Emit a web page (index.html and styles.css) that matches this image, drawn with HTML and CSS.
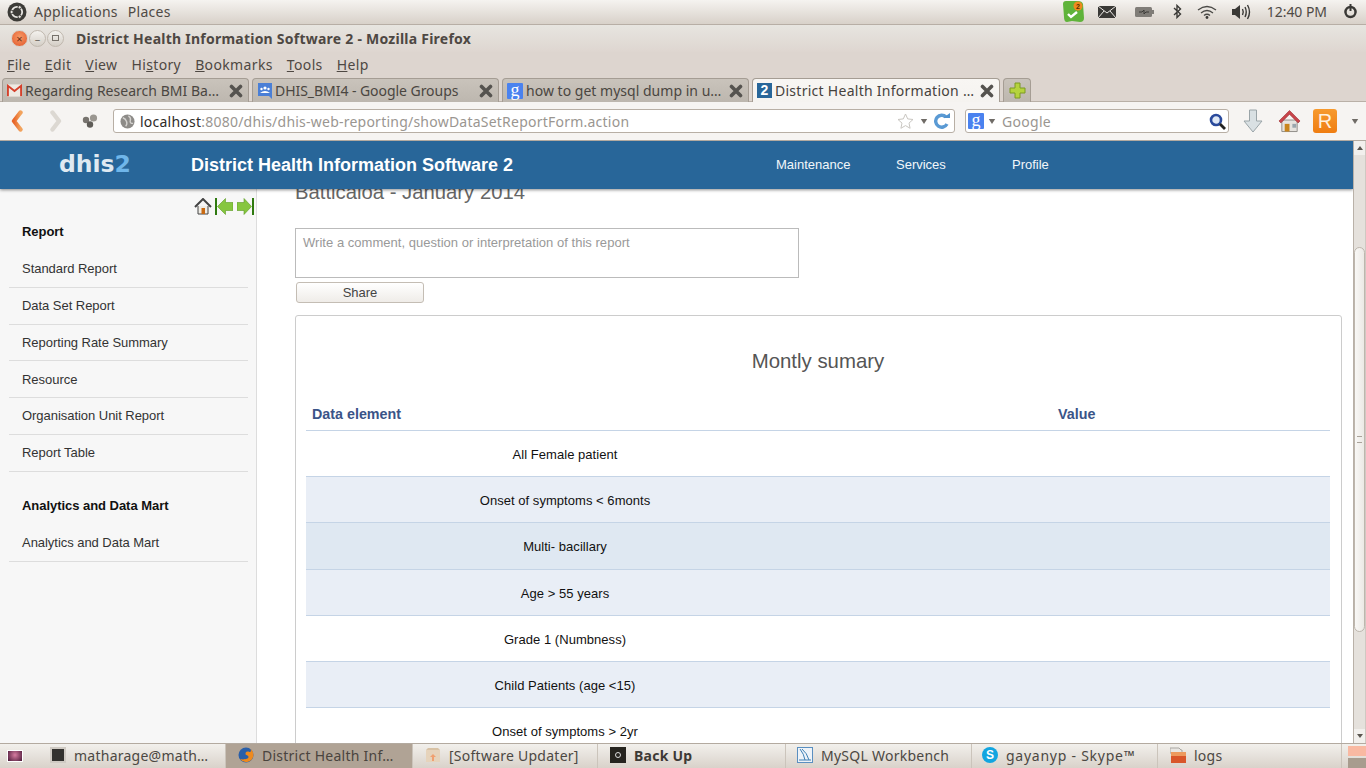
FILE: index.html
```html
<!DOCTYPE html>
<html lang="en">
<head>
<meta charset="utf-8">
<title>District Health Information Software 2 - Mozilla Firefox</title>
<link rel="stylesheet" href="styles.css">
</head>
<body>
<svg class="defs" width="0" height="0" aria-hidden="true">
  <symbol id="tabx" viewBox="0 0 14 14"><path d="M2.5 2.5 11.5 11.5M11.5 2.5 2.5 11.5" stroke="#55534f" stroke-width="3.6" stroke-linecap="round"/></symbol>
  <symbol id="caret" viewBox="0 0 10 6"><path d="M1 0h8L5 6z" fill="#6f6b66"/></symbol>
</svg>
<div class="desktop">
  <header class="panel">
    <div class="panel-left">
      <svg class="ubuntu" width="20" height="20" viewBox="0 0 20 20"><circle cx="10" cy="10" r="9.5" fill="#3c3b37"/><circle cx="10" cy="10" r="5.2" fill="none" stroke="#e8e6e2" stroke-width="1.8"/><circle cx="4.6" cy="10" r="1.7" fill="#e8e6e2" stroke="#3c3b37"/><circle cx="12.7" cy="5.3" r="1.7" fill="#e8e6e2" stroke="#3c3b37"/><circle cx="12.7" cy="14.7" r="1.7" fill="#e8e6e2" stroke="#3c3b37"/></svg>
      <span class="panel-menu">Applications</span>
      <span class="panel-menu">Places</span>
    </div>
    <div class="tray">
      <svg class="t-ever" width="22" height="21" viewBox="0 0 22 21"><path d="M1 3q0-3 3-3h12q4 0 5 3l1 14q0 4-4 4l-8-1-5 1Q2 21 2 16z" fill="#5fb33a"/><path d="M6 13l3 3 6-5" fill="none" stroke="#fff" stroke-width="2.4"/><circle cx="16" cy="5" r="4.500" fill="#f08a1d"/><text class="badge-num" x="16" y="8">2</text></svg>
      <svg class="t-mail" width="18" height="12" viewBox="0 0 18 12"><rect width="18" height="12" fill="#3a3936"/><path d="M0 0l9 7 9-7M0 12l6-7M18 12l-6-7" fill="none" stroke="#ece9e5" stroke-width="1"/></svg>
      <svg class="t-batt" width="19" height="10" viewBox="0 0 19 10"><rect width="17" height="10" rx="1.5" fill="#807d78"/><rect x="17" y="3" width="2" height="4" fill="#807d78"/><path d="M4 5h3l2-2v4l2-2h3" fill="none" stroke="#3b3a37" stroke-width="1"/></svg>
      <svg class="t-bt" width="9" height="15" viewBox="0 0 9 15"><path d="M1 4l6.500 6L4 13.500V1.500L7.500 5 1 11" fill="none" stroke="#3a3936" stroke-width="1.400"/></svg>
      <svg class="t-wifi" width="20" height="14" viewBox="0 0 20 14"><g fill="none" stroke="#4a4946" stroke-width="1.300"><path d="M1 5q9-7 18 0"/><path d="M4 8q6-5 12 0"/><path d="M7 10.500q3-2.500 6 0"/></g><circle cx="10" cy="12.500" r="1.400" fill="#3a3936"/></svg>
      <svg class="t-vol" width="20" height="16" viewBox="0 0 20 16"><path d="M0 5h3l5-4v14l-5-4H0z" fill="#3a3936"/><g fill="none" stroke="#3a3936" stroke-width="1.400"><path d="M10.500 5q1.500 3 0 6"/><path d="M13 3q2.500 5 0 10"/><path d="M15.500 1q4 7 0 14"/></g></svg>
      <span class="clock">12:40 PM</span>
      <svg class="t-power" width="15" height="15" viewBox="0 0 15 15"><circle cx="7.500" cy="8" r="5" fill="none" stroke="#3a3936" stroke-width="2.400"/><path d="M7.500 0v7" stroke="#3a3936" stroke-width="2"/><path d="M7.500 1.500v11M1.500 8h12M3.500 4l8 8M11.500 4l-8 8" stroke="#3a3936" stroke-width="1" stroke-dasharray="1.500 9"/></svg>
    </div>
  </header>

  <div class="titlebar">
    <div class="winbtns">
      <span class="winbtn close">×</span>
      <span class="winbtn">–</span>
      <span class="winbtn"><i class="max"></i></span>
    </div>
    <span class="wintitle">District Health Information Software 2 - Mozilla Firefox</span>
  </div>

  <nav class="menubar">
    <span><u>F</u>ile</span><span><u>E</u>dit</span><span><u>V</u>iew</span><span>Hi<u>s</u>tory</span><span><u>B</u>ookmarks</span><span><u>T</u>ools</span><span><u>H</u>elp</span>
  </nav>

  <div class="tabstrip">
    <div class="tab">
      <svg class="fav fav1" width="15" height="13" viewBox="0 0 16 13"><rect width="16" height="13" fill="#eee9e2"/><path d="M1 12.500V1.500L8 7l7-5.500v11" fill="none" stroke="#d5402b" stroke-width="2"/></svg>
      <span class="tab-text sp1">Regarding Research BMI Ba…</span>
      <svg class="x" width="14" height="14"><use href="#tabx"/></svg>
    </div>
    <div class="tab">
      <svg class="fav fav2" width="14" height="16" viewBox="0 0 14 16"><path d="M0 0h14v16l-3-3H0z" fill="#4a7fd6"/><circle cx="7" cy="5" r="1.600" fill="#fff"/><circle cx="3.500" cy="6" r="1.200" fill="#fff"/><circle cx="10.500" cy="6" r="1.200" fill="#fff"/><path d="M2 10q5-4 10 0z" fill="#fff"/></svg>
      <span class="tab-text sp2">DHIS_BMI4 - Google Groups</span>
      <svg class="x" width="14" height="14"><use href="#tabx"/></svg>
    </div>
    <div class="tab">
      <span class="gfav">g</span>
      <span class="tab-text sp1">how to get mysql dump in u…</span>
      <svg class="x" width="14" height="14"><use href="#tabx"/></svg>
    </div>
    <div class="tab active">
      <span class="dfav">2</span>
      <span class="tab-text">District Health Information …</span>
      <svg class="x" width="14" height="14"><use href="#tabx"/></svg>
    </div>
    <div class="tab newtab">
      <svg width="17" height="17" viewBox="0 0 17 17"><path d="M6 1h5v5h5v5h-5v5H6v-5H1V6h5z" fill="#b5d33d" stroke="#7d9a22"/></svg>
    </div>
  </div>

  <div class="navbar">
    <svg class="back" width="14" height="22" viewBox="0 0 14 22"><defs><linearGradient id="bk" x1="0" y1="0" x2="1" y2="0"><stop offset="0" stop-color="#e8662a"/><stop offset="1" stop-color="#f2a25c"/></linearGradient></defs><path d="M10.500 2.500 4 11l6.500 8.500" fill="none" stroke="url(#bk)" stroke-width="4.400" stroke-linejoin="round" stroke-linecap="round"/></svg>
    <svg class="fwd" width="14" height="22" viewBox="0 0 14 22"><path d="M3.500 2.500 10 11l-6.500 8.500" fill="none" stroke="#dcd8d2" stroke-width="4.400" stroke-linejoin="round" stroke-linecap="round"/></svg>
    <svg class="hist" width="16" height="14" viewBox="0 0 16 14"><circle cx="4" cy="6" r="3.200" fill="#77736e"/><circle cx="11.500" cy="4" r="3.600" fill="#9a9690"/><circle cx="8" cy="10.500" r="3.200" fill="#5f5c58"/></svg>
    <div class="urlbar">
      <svg class="globe" width="15" height="15" viewBox="0 0 16 16"><circle cx="8" cy="8" r="7.500" fill="#8d8b88"/><path d="M3 4q3 1 4 4t-1 5M9 2q3 2 2 5t3 3" fill="none" stroke="#d4d2cf" stroke-width="1.500"/></svg>
      <span class="url"><b>localhost</b>:8080/dhis/dhis-web-reporting/showDataSetReportForm.action</span>
      <svg class="star" width="17" height="16" viewBox="0 0 17 16"><path d="M8.500 1l2.200 4.900 5.300.6-4 3.600 1.100 5.200-4.600-2.700-4.600 2.700 1.100-5.200-4-3.600 5.300-.6z" fill="#fff" stroke="#c9c6c1"/></svg>
      <svg class="caret" width="8" height="5"><use href="#caret"/></svg>
      <svg class="reload" width="16" height="16" viewBox="0 0 16 16"><path d="M13 11a6 6 0 1 1-1-7" fill="none" stroke="#5a9ad4" stroke-width="3.400"/><path d="M9 5h7V0z" fill="#4f92cf"/></svg>
    </div>
    <div class="searchbar">
      <span class="gfav big">g</span>
      <svg class="caret" width="8" height="5"><use href="#caret"/></svg>
      <span class="search-text">Google</span>
      <svg class="lens" width="17" height="17" viewBox="0 0 17 17"><circle cx="7" cy="7" r="5" fill="#dfe8f5" stroke="#2a4a9c" stroke-width="2.600"/><path d="M11 11l5 5" stroke="#222" stroke-width="2.800"/></svg>
    </div>
    <svg class="dl" width="20" height="24" viewBox="0 0 20 24"><path d="M6.500 1h7v11H19l-9 11-9-11h5.500z" fill="#d9e0e3" stroke="#9aa4a8"/></svg>
    <svg class="home" width="23" height="24" viewBox="0 0 24 24"><path d="M4 11h16v12H4z" fill="#e6e3de" stroke="#8f8c88"/><path d="M1 12 12 1l11 11-2 2-9-9-9 9z" fill="#c8444a" stroke="#9a2b30" stroke-width=".6"/><rect x="7" y="15" width="5" height="8" fill="#c9851c"/><rect x="15" y="15" width="4" height="4" fill="#9aa6ad"/></svg>
    <span class="rbtn">R</span>
    <svg class="caret more" width="8" height="5"><use href="#caret"/></svg>
  </div>

  <div class="browser">
    <div class="page">
      <div class="appbar">
        <span class="logo">dhis<em>2</em></span>
        <span class="apptitle">District Health Information Software 2</span>
        <nav class="appnav"><a>Maintenance</a><a>Services</a><a>Profile</a></nav>
      </div>
      <div class="columns">
        <aside class="sidebar">
          <div class="sidetools">
            <svg width="18" height="17" viewBox="0 0 18 17"><path d="M4 8v8h10V8" fill="#efece6" stroke="#444"/><path d="M1 9l8-8 8 8" fill="none" stroke="#444" stroke-width="2"/><rect x="7.500" y="10" width="3.500" height="6" fill="#c96a12"/></svg>
            <svg width="18" height="17" viewBox="0 0 18 17"><rect width="2" height="17" fill="#2f7a10"/><path d="M2.500 8.500 10.500 .5v4H18v8h-7.500v4z" fill="#86c63f" stroke="#5a9a22" stroke-width=".6"/></svg>
            <svg class="tool-next" width="17" height="17" viewBox="0 0 17 17"><rect x="15" width="2" height="17" fill="#2f7a10"/><path d="M14.500 8.500 7 .5v4H0v8h7v4z" fill="#86c63f" stroke="#5a9a22" stroke-width=".6"/></svg>
          </div>
          <h4>Report</h4>
          <ul>
            <li>Standard Report</li>
            <li>Data Set Report</li>
            <li>Reporting Rate Summary</li>
            <li>Resource</li>
            <li>Organisation Unit Report</li>
            <li>Report Table</li>
          </ul>
          <h4 class="second">Analytics and Data Mart</h4>
          <ul>
            <li>Analytics and Data Mart</li>
          </ul>
        </aside>
        <main class="content">
          <h3 class="rep-title">Batticaloa - January 2014</h3>
          <div class="comment">Write a comment, question or interpretation of this report</div>
          <button class="share" type="button">Share</button>
          <section class="report">
            <h2>Montly sumary</h2>
            <table>
              <colgroup><col class="c1"><col class="c2"><col></colgroup>
              <thead><tr><th colspan="2">Data element</th><th>Value</th></tr></thead>
              <tbody>
                <tr><td>All Female patient</td><td></td><td></td></tr>
                <tr class="alt"><td>Onset of symptoms &lt; 6monts</td><td></td><td></td></tr>
                <tr class="hover"><td>Multi- bacillary</td><td></td><td></td></tr>
                <tr class="alt"><td>Age &gt; 55 years</td><td></td><td></td></tr>
                <tr><td>Grade 1 (Numbness)</td><td></td><td></td></tr>
                <tr class="alt"><td>Child Patients (age &lt;15)</td><td></td><td></td></tr>
                <tr><td>Onset of symptoms &gt; 2yr</td><td></td><td></td></tr>
              </tbody>
            </table>
          </section>
        </main>
      </div>
    </div>
    <div class="scrollbar">
      <div class="sb-btn"><i class="up"></i></div>
      <div class="sb-track"><div class="sb-thumb"><i></i></div></div>
      <div class="sb-btn"><i class="down"></i></div>
    </div>
  </div>

  <footer class="taskbar">
    <div class="showdesk"><span class="deskicon"></span></div>
    <div class="task first"><span class="ti term"></span><span>matharage@math…</span></div>
    <div class="task cur"><svg class="ti" width="16" height="16" viewBox="0 0 16 16"><circle cx="8" cy="8" r="7.500" fill="#2a5fa8"/><path d="M2 12A7.500 7.500 0 0 0 15.500 8c0-3-1.500-5-3-6 1 2 0 3-1 3-3-1-4 0-4 2 0 1.500 3 1 3 3s-5 3-8.500 2z" fill="#ee8a1e"/></svg><span>District Health Inf…</span></div>
    <div class="task upd"><svg class="ti" width="16" height="16" viewBox="0 0 16 16"><path d="M1 3h14v12H1z" fill="#e6d3bb"/><path d="M1 3l2-2h10l2 2z" fill="#d8c2a5"/><path d="M8 7l3 3H9v4H7v-4H5z" fill="#f0a070"/></svg><span>[Software Updater]</span></div>
    <div class="task strong"><span class="ti safe"><i></i></span><span>Back Up</span></div>
    <div class="task wb"><svg class="ti" width="16" height="16" viewBox="0 0 16 16"><rect x=".5" y=".5" width="15" height="15" fill="#eef3f8" stroke="#5a8fc0"/><path d="M3 2q4 5 5 11M5 2q5 4 7 11" fill="none" stroke="#3c7fb5"/><path d="M2 13h12" stroke="#3c7fb5"/></svg><span>MySQL Workbench</span></div>
    <div class="task sk"><span class="ti skype">S</span><span>gayanyp - Skype™</span></div>
    <div class="task lg"><svg class="ti" width="16" height="16" viewBox="0 0 16 16"><path d="M0 1h9l2 2h1v3H0z" fill="#e8e6e2" stroke="#a9a6a1"/><rect x="1" y="5" width="15" height="11" fill="#d9562a"/><rect x="1" y="5" width="15" height="4" fill="#ed9a5e"/></svg><span>logs</span></div>
    <div class="trash"><i></i><i></i></div>
  </footer>
</div>
</body>
</html>
```

FILE: styles.css
```css
* { box-sizing: border-box; }
html, body { margin: 0; padding: 0; height: 100%; overflow: hidden; }
body { font-family: "Noto Sans", "Liberation Sans", sans-serif; color: #4c4742; }
.defs { position: absolute; }
svg { display: block; flex: none; }
.desktop { width: 1366px; height: 768px; display: flex; flex-direction: column; background: #ddd5cf; }

/* top panel */
.panel { height: 25px; display: flex; justify-content: space-between; align-items: center; padding: 0 0 1px 7px; background: linear-gradient(#f5f3f0, #d8d1c9); border-bottom: 1px solid #b7aea5; font-size: 14px; }
.panel-left { display: flex; align-items: center; }
.panel-menu { margin-left: 7px; letter-spacing: .28px; color: #4f4a45; }
.panel-menu + .panel-menu { margin-left: 10px; }
.tray { display: flex; align-items: center; }
.t-ever { margin-right: 14px; }
.badge-num { font: 700 7px "Liberation Sans", sans-serif; fill: #5a3000; text-anchor: middle; }
.t-mail { margin-right: 19px; }
.t-batt { margin-right: 19px; }
.t-bt { margin-right: 15px; }
.t-wifi { margin-right: 15px; }
.t-vol { margin-right: 15px; }
.clock { margin-right: 16px; letter-spacing: -.05px; color: #4f4a45; }
.t-power { margin-right: 8px; }

/* title bar */
.titlebar { height: 27px; display: flex; align-items: center; padding: 0 0 1px 11px; background: linear-gradient(#e7e5e0, #ded6d0); }
.winbtns { display: flex; gap: 1px; }
.winbtn { width: 17px; height: 17px; border-radius: 50%; background: linear-gradient(#f4f2ee, #d4cec6); border: 1px solid #c0b8ae; display: flex; align-items: center; justify-content: center; font-size: 11px; line-height: 1; color: #6e6962; }
.winbtn.close { background: radial-gradient(circle at 50% 40%, #f89a66, #e0562a); border-color: #d5d0c8; color: #6b3018; }
.max { width: 7px; height: 6px; border: 1px solid #77726b; }
.wintitle { margin-left: 12px; font-size: 14px; font-weight: 700; letter-spacing: .24px; color: #4e4843; }

/* menu bar */
.menubar { height: 26px; display: flex; align-items: center; padding: 0 0 1px 7px; gap: 14px; font-size: 14px; background: #ddd5cf; color: #4e4843; letter-spacing: .36px; }

/* tabs */
.tabstrip { height: 24px; display: flex; align-items: flex-end; padding-left: 2px; gap: 3px; background: linear-gradient(#ddd5cf 23px, #b9b0a7 23px); }
.tab { width: 247px; height: 24px; display: flex; align-items: center; padding: 0 5px 0 4px; background: linear-gradient(#c9c3bb, #bdb7af); border: 1px solid #a59d94; border-bottom: 0; border-radius: 4px 4px 0 0; font-size: 14px; color: #4a4641; overflow: hidden; white-space: nowrap; }
.tab.active { width: 248px; background: linear-gradient(#f8f6f3, #f5f3f0); color: #46423d; }
.tab.newtab { width: 28px; justify-content: center; padding: 0; }
.tab-text { flex: 1; margin-left: 3px; letter-spacing: .27px; }
.tab-text.sp1 { letter-spacing: .02px; }
.tab-text.sp2 { letter-spacing: -.05px; }
.fav2 { margin-left: 1px; }
.x { margin-left: 5px; }
.gfav { width: 16px; height: 16px; flex: none; background: #4a82ef; color: #fff; font: 400 18px/14px "Liberation Serif", serif; text-align: center; border-radius: 1px; }
.dfav { width: 15px; height: 15px; flex: none; background: #286699; color: #fff; font: 700 14px/15px "Liberation Sans", sans-serif; text-align: center; }

/* nav bar */
.navbar { height: 39px; display: flex; align-items: center; background: #f6f4f2; border-bottom: 1px solid #b3aaa0; padding-left: 10px; }
.fwd { margin-left: 25px; }
.hist { margin-left: 19px; }
.urlbar { width: 842px; height: 24px; margin-left: 15px; display: flex; align-items: center; padding: 0 4px 0 6px; background: #fff; border: 1px solid #b8afa5; border-radius: 3px; }
.globe { margin-right: 5px; }
.url { flex: 1; font-size: 14px; letter-spacing: .23px; color: #9a9691; white-space: nowrap; }
.url b { font-weight: 400; color: #2e2b28; }
.star { margin-right: 6px; }
.urlbar .caret { margin-right: 6px; }
.searchbar { width: 264px; height: 24px; margin-left: 10px; display: flex; align-items: center; padding: 0 2px 0 2px; background: #fff; border: 1px solid #b8afa5; border-radius: 3px; }
.searchbar .caret { margin-left: 4px; }
.search-text { flex: 1; margin-left: 6px; font-size: 14px; letter-spacing: .3px; color: #9a9691; }
.dl { margin-left: 14px; }
.home { margin-left: 15px; }
.rbtn { width: 24px; height: 24px; margin-left: 12px; flex: none; border-radius: 3px; background: linear-gradient(#f79a2e, #ef7d12); color: #fff0dd; font: 400 20px/24px "Liberation Sans", sans-serif; text-align: center; }
.more { margin-left: 14px; }

/* browser page */
.browser { flex: 1; min-height: 0; display: flex; }
.page { position: relative; flex: 1; min-width: 0; display: flex; flex-direction: column; overflow: hidden; background: #fff; font-family: "Liberation Sans", Arial, sans-serif; }
.appbar { position: absolute; top: 0; left: 0; right: 0; height: 48px; z-index: 2; display: flex; align-items: center; background: #286699; box-shadow: 0 1px 3px rgba(0,0,0,.45); color: #fff; }
.logo { width: 191px; padding-left: 59px; font: 700 23.5px/1 "DejaVu Sans", sans-serif; color: #dfe9f1; }
.logo em { font-style: normal; color: #6fb6ea; }
.apptitle { font-size: 18px; font-weight: 700; width: 585px; color: #fff; }
.appnav { display: flex; font-size: 13px; color: #f2f6fa; padding-bottom: 1px; }
.appnav a { display: block; }
.appnav a:nth-child(1) { width: 120px; }
.appnav a:nth-child(2) { width: 116px; }
.columns { flex: 1; min-height: 0; display: flex; }
.sidebar { width: 257px; flex: none; background: #f7f7f7; border-right: 1px solid #ddd; padding: 57px 8px 0 9px; font-size: 13px; color: #333; letter-spacing: -.04px; }
.sidetools { position: absolute; top: 57px; left: 194px; display: flex; gap: 3px; }
.tool-next { margin-left: 1px; }
.sidebar h4 { margin: 26px 0 0; padding-left: 13px; height: 27px; font-size: 13px; line-height: 16px; color: #111; }
.sidebar ul { list-style: none; margin: 0; padding: 0; }
.sidebar li { height: 36.8px; padding: .6px 0 0 13px; line-height: 16px; display: flex; align-items: center; border-bottom: 1px solid #ddd; }
.content { flex: 1; min-width: 0; padding: 39px 11px 0 38px; }
.rep-title { margin: 0; font-size: 20.3px; line-height: 24px; font-weight: 400; color: #666; }
.comment { width: 504px; height: 50px; margin-top: 24px; padding: 6px 7px; border: 1px solid #bbb; font-size: 13px; line-height: 15px; letter-spacing: .03px; color: #999; background: #fff; }
.share { display: block; width: 128px; height: 21px; margin: 4px 0 0 1px; padding: 0; border: 1px solid #c4bdb4; border-radius: 3px; background: linear-gradient(#fff, #efece8); font: 13px "Liberation Sans", sans-serif; color: #444; }
.report { margin-top: 12px; height: 500px; padding: 0 11px 0 10px; border: 1px solid #ccc; border-radius: 3px; }
.report h2 { margin: 33px 0 0; font-size: 20.4px; line-height: 24px; font-weight: 400; text-align: center; color: #555; }
table { width: 1024px; margin-top: 21px; border-collapse: collapse; table-layout: fixed; font-size: 13px; color: #111; }
.c1 { width: 518px; }
.c2 { width: 228px; }
th { height: 36px; padding: 5px 6px 0; text-align: left; font-size: 14.3px; color: #3a5488; border-bottom: 1px solid #c5d4e6; }
td { height: 46px; padding: 2px 0 0; text-align: center; letter-spacing: .04px; border-bottom: 1px solid #c5d4e6; }
.alt td { background: #e9eef6; }
.hover td { height: 47px; background: #dfe8f2; }

/* scrollbar */
.scrollbar { width: 13px; flex: none; display: flex; flex-direction: column; background: #e5e1dc; border-left: 1px solid #b9b1a8; border-right: 1px solid #cfc9c2; }
.sb-btn { height: 14px; display: flex; align-items: center; justify-content: center; background: #f2f0ed; }
.sb-btn i { width: 0; height: 0; border-left: 3px solid transparent; border-right: 3px solid transparent; }
.up { border-bottom: 4px solid #5a5650; }
.down { border-top: 4px solid #5a5650; }
.sb-track { flex: 1; padding-top: 92px; }
.sb-thumb { height: 385px; display: flex; align-items: center; justify-content: center; background: linear-gradient(90deg, #f9f8f6, #ece9e5); border: 1px solid #bdb6ad; border-radius: 6px; }
.sb-thumb i { width: 5px; height: 7px; border-top: 1px solid #aaa39a; border-bottom: 1px solid #aaa39a; }

/* task bar */
.taskbar { height: 25px; display: flex; background: linear-gradient(#f2f0ec, #d9d2ca); border-top: 1px solid #b3aaa0; font-size: 14px; color: #4c4843; }
.showdesk { width: 30px; flex: none; display: flex; align-items: center; padding-left: 7px; }
.deskicon { width: 16px; height: 12px; background: radial-gradient(circle at 50% 40%, #d77ca0, #4a1838); border: 1px solid #fff; }
.task { width: 186px; flex: none; display: flex; align-items: center; padding: 0 0 2px 8px; gap: 8px; letter-spacing: .25px; border-right: 1px solid #cbc4bb; white-space: nowrap; }
.task.first { width: 196px; padding-left: 20px; }
.task.cur { width: 187px; padding-left: 12px; background: #b0a395; color: #4a443e; }
.task.upd { width: 185px; padding-left: 12px; }
.task.strong { width: 188px; font-weight: 700; padding-left: 12px; }
.task.strong span { color: #3d3935; }
.task.wb { padding-left: 11px; }
.task.sk { padding-left: 10px; letter-spacing: .75px; }
.task.lg { width: 184px; padding-left: 12px; }
.ti { width: 16px; height: 16px; flex: none; }
.term { background: #33322f; border: 2px solid #cfcac3; }
.safe { background: #26241f; display: flex; align-items: center; justify-content: center; }
.safe i { width: 6px; height: 6px; border-radius: 50%; border: 1px solid #ddd; }
.skype { border-radius: 50%; background: #12a5e0; color: #fff; font: 700 12px/16px "Liberation Sans", sans-serif; text-align: center; letter-spacing: 0; }
.trash { flex: 1; display: flex; flex-direction: column; padding-left: 6px; }
.trash i { display: block; width: 100%; }
.trash i:first-child { height: 10px; margin-top: 2px; background: #f9b9a2; }
.trash i:last-child { flex: 1; margin-top: 2px; background: #a89c8e; }
```
